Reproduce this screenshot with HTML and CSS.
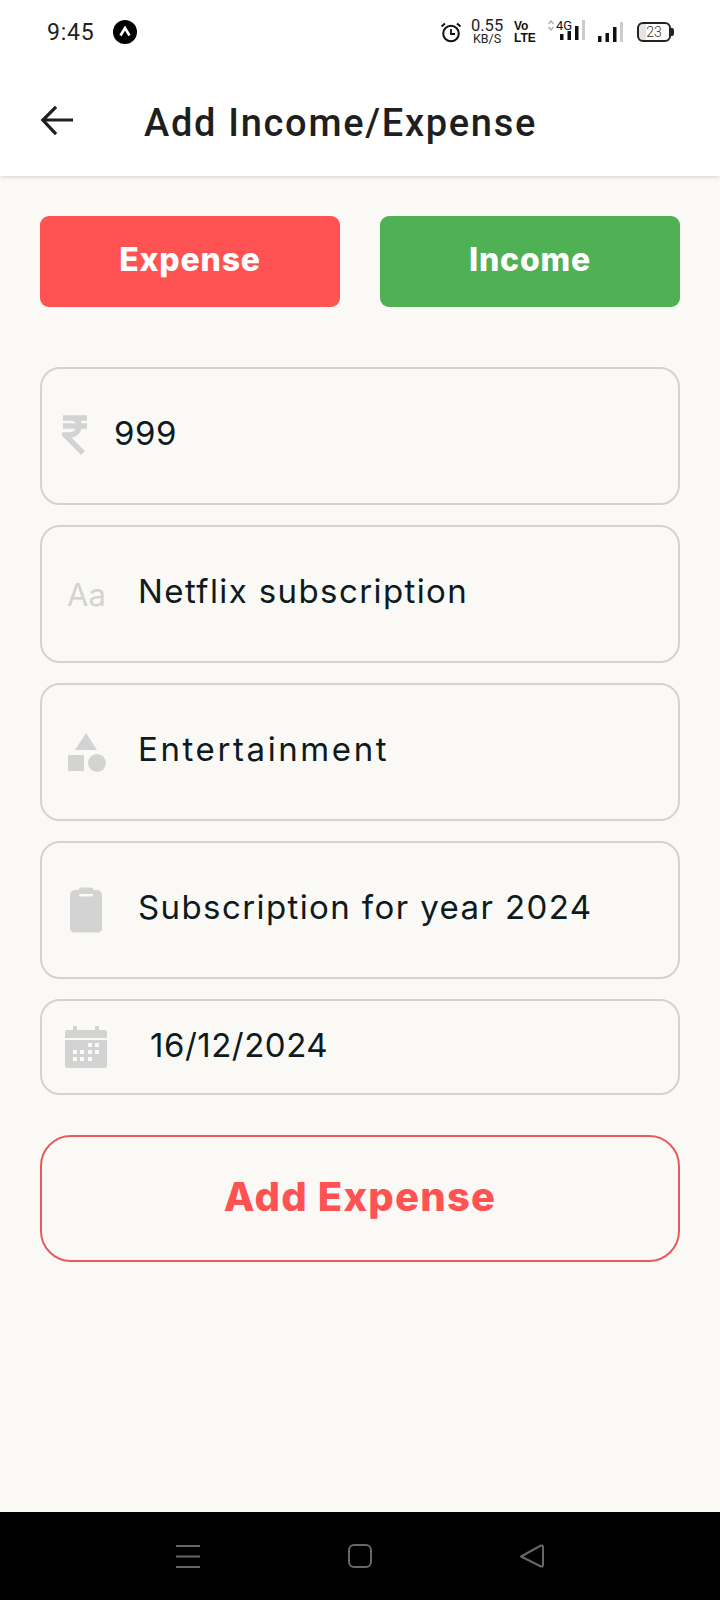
FILE: index.html
```html
<!doctype html>
<html lang="en">
  <head>
    <meta charset="UTF-8">
    <meta content="width=device-width, initial-scale=1.0" name="viewport">
    <title>Add Income/Expense</title>
    <link rel="stylesheet" href="styles.css">
  </head>
  <body>
    <div class="screen">
      <div class="status-bar">
        <div class="status-left">
          <span class="clock">9:45</span>
          <svg class="app-dot" width="24" height="24" viewBox="0 0 24 24">
            <circle cx="12" cy="12" r="12" fill="#000"/>
            <path d="M7.5 15.5 L12 8 L16.5 15.5" fill="none" stroke="#fff" stroke-width="2.6"/>
          </svg>
        </div>
        <div class="status-right">
          <svg width="22" height="22" viewBox="0 0 22 22" class="alarm">
            <circle cx="11" cy="12.5" r="7.8" fill="none" stroke="#111" stroke-width="2"/>
            <path d="M11 8 V13 H15" fill="none" stroke="#111" stroke-width="1.8"/>
            <path d="M1.5 5.5 L5 2.5 M20.500 5.500 L17 2.500" stroke="#111" stroke-width="2"/>
          </svg>
          <div class="speed"><span class="speed-num">0.55</span><span class="speed-unit">KB/S</span></div>
          <div class="volte"><span>Vo</span><span>LTE</span></div>
          <div class="net">
            <span class="net-label">4G</span>
            <svg width="41" height="24" viewBox="0 0 41 24">
              <path d="M4.500 6 L7 3 L9.500 6 M4.500 9 L7 12 L9.500 9" fill="none" stroke="#aaa" stroke-width="1.200"/>
              <rect x="16" y="16" width="3.500" height="6" fill="#111"/>
              <rect x="23.500" y="13" width="3.500" height="9" fill="#111"/>
              <rect x="31" y="8" width="3.500" height="14" fill="#111"/>
              <rect x="38" y="2" width="3" height="20" fill="#ccc"/>
            </svg>
          </div>
          <svg width="27" height="24" viewBox="0 0 27 24" class="signal">
            <rect x="1" y="16" width="3.500" height="6" fill="#111"/>
            <rect x="8.500" y="13" width="3.500" height="9" fill="#111"/>
            <rect x="16" y="7" width="3.500" height="15" fill="#111"/>
            <rect x="23" y="2" width="3" height="20" fill="#ccc"/>
          </svg>
          <div class="battery"><span class="battery-level">23</span></div>
        </div>
      </div>

      <header class="app-header">
        <svg class="back" width="34" height="34" viewBox="0 0 36 36">
          <path d="M35 18 H4 M17 4 L3 18 L17 33" fill="none" stroke="#1f1f1f" stroke-width="3.400"/>
        </svg>
        <h1>Add Income/Expense</h1>
      </header>

      <main class="content">
        <div class="type-row">
          <button class="type-btn expense">Expense</button>
          <button class="type-btn income">Income</button>
        </div>

        <div class="fields">
          <div class="field tall amount">
            <svg class="icon" width="26" height="40" viewBox="0 0 26 40">
              <path d="M1 3 H25 M1 11 H25 M2 3 H9 C15 3 17 7 17 11 C17 16 13 20 8 20 H3 L21 38" fill="none" stroke="#d3d3d3" stroke-width="5.400"/>
            </svg>
            <span class="value num">999</span>
          </div>
          <div class="field tall">
            <span class="icon-box"><span class="aa">Aa</span></span>
            <span class="value">Netflix subscription</span>
          </div>
          <div class="field tall">
            <span class="icon-box">
              <svg width="40" height="40" viewBox="0 0 40 40">
                <path d="M19 1 L30 18 H8 Z" fill="#d3d3d3"/>
                <rect x="1" y="23" width="16" height="16" fill="#d3d3d3"/>
                <circle cx="30" cy="31" r="9" fill="#d3d3d3"/>
              </svg>
            </span>
            <span class="value wide">Entertainment</span>
          </div>
          <div class="field tall">
            <span class="icon-box">
              <svg class="clip" width="36" height="46" viewBox="0 0 36 46">
                <path d="M8 3 H10 C11 1 13 0.500 15 0.500 H21 C23 0.500 25 1 26 3 H28 C32 3 34 5 34 9 V41 C34 44 32 45.500 30 45.500 H6 C4 45.500 2 44 2 41 V9 C2 5 4 3 8 3 Z" fill="#d3d3d3"/>
                <rect x="11" y="7" width="14" height="2.400" rx="1" fill="#fafaf7"/>
              </svg>
            </span>
            <span class="value">Subscription for year 2024</span>
          </div>
          <div class="field short">
            <svg class="icon cal" width="42" height="42" viewBox="0 0 42 42">
              <path d="M8 0 H12 V4 H30 V0 H34 V4 H40 C41 4 42 5 42 6 V12 H0 V6 C0 5 1 4 2 4 H8 Z" fill="#d3d3d3"/>
              <path d="M0 14 H42 V40 C42 41 41 42 40 42 H2 C1 42 0 41 0 40 Z" fill="#d3d3d3"/>
              <g fill="#fafaf7">
                <rect x="23" y="17" width="4" height="4"/><rect x="30" y="17" width="4" height="4"/>
                <rect x="8" y="24" width="4" height="4"/><rect x="15" y="24" width="4" height="4"/><rect x="23" y="24" width="4" height="4"/><rect x="30" y="24" width="4" height="4"/>
                <rect x="8" y="31" width="4" height="4"/><rect x="15" y="31" width="4" height="4"/><rect x="23" y="31" width="4" height="4"/>
              </g>
            </svg>
            <span class="value num date">16/12/2024</span>
          </div>
        </div>

        <button class="submit">Add Expense</button>
      </main>

      <nav class="nav-bar">
        <svg width="24" height="24" viewBox="0 0 24 24">
          <path d="M0 2 H24 M0 12.500 H24 M0 23 H24" stroke="#666" stroke-width="2"/>
        </svg>
        <svg width="24" height="24" viewBox="0 0 24 24">
          <rect x="1" y="1" width="22" height="22" rx="5" fill="none" stroke="#666" stroke-width="2"/>
        </svg>
        <svg width="24" height="24" viewBox="0 0 24 24">
          <path d="M1 12.500 L21 1.500 Q23 1 23 3 V21 Q23 23 21 22.500 Z" fill="none" stroke="#666" stroke-width="2" stroke-linejoin="round"/>
        </svg>
      </nav>
    </div>
  </body>
</html>
```

FILE: styles.css
```css
* {
  box-sizing: border-box
}
body {
  background-color: #000;
  color: #0d1a20;
  font-family: Inter, sans-serif;
  margin: 0
}
.screen {
  display: flex;
  flex-direction: column;
  height: 1600px;
  width: 720px
}
.status-bar {
  align-items: center;
  background-color: #fff;
  display: flex;
  height: 64px;
  justify-content: space-between;
  padding: 0 49px 0 47px
}
.status-left, .status-right {
  align-items: center;
  display: flex
}
.clock {
  color: #222;
  font-family: Roboto, sans-serif;
  font-size: 23px;
  letter-spacing: .8px;
  margin-right: 18px
}
.alarm {
  margin-right: 9px
}
.speed {
  color: #222;
  display: flex;
  flex-direction: column;
  font-family: Roboto, sans-serif;
  margin-right: 11px;
  text-align: center;
  width: 32px
}
.speed-num {
  font-size: 16.500px;
  line-height: 14px
}
.speed-unit {
  font-size: 12.500px;
  line-height: 12px
}
.volte {
  color: #111;
  display: flex;
  flex-direction: column;
  font-family: "Liberation Sans", sans-serif;
  font-size: 12px;
  font-weight: 700;
  line-height: 1;
  margin-right: 6px;
  width: 24px
}
.net {
  margin-right: 12px;
  position: relative
}
.net-label {
  color: #111;
  font-family: Roboto, sans-serif;
  font-size: 13px;
  left: 12px;
  line-height: 13px;
  position: absolute;
  top: 1px
}
.signal {
  margin-right: 13px
}
.battery {
  align-items: center;
  background: linear-gradient(to right, #e4e4e4 25%, transparent 25%);
  border: 2px solid #222;
  border-radius: 6px;
  display: flex;
  height: 20px;
  justify-content: center;
  position: relative;
  width: 34px
}
.battery::after {
  background-color: #222;
  border-radius: 0 2px 2px 0;
  content: "";
  height: 8px;
  position: absolute;
  right: -5px;
  width: 3px
}
.battery-level {
  color: #333;
  font-family: Roboto, sans-serif;
  font-size: 14px;
  font-weight: 300;
  line-height: 16px
}
.app-header {
  align-items: center;
  background-color: #fff;
  box-shadow: 0 2px 4px -1px rgba(0, 0, 0, .16);
  display: flex;
  height: 112px;
  padding: 6px 0 0 40px;
  position: relative;
  z-index: 1
}
.back {
  margin-bottom: 6px
}
.app-header h1 {
  color: #1f1f1f;
  font-family: Roboto, sans-serif;
  font-size: 38px;
  font-weight: 500;
  letter-spacing: 1.700px;
  margin: 0 0 0 70px
}
.content {
  background-color: #faf9f6;
  flex: 1;
  padding: 40px 40px 0
}
.type-row {
  display: flex;
  gap: 40px
}
.type-btn {
  border: 0;
  border-radius: 9px;
  color: #fff;
  flex: 1;
  font-family: Inter, sans-serif;
  font-size: 32px;
  font-weight: 800;
  height: 91px;
  letter-spacing: .8px;
  padding-bottom: 6px
}
.expense {
  background-color: #ff5252
}
.income {
  background-color: #4fb054
}
.fields {
  display: flex;
  flex-direction: column;
  gap: 20px;
  margin-top: 60px
}
.field {
  align-items: center;
  border: 2px solid #d3d3d1;
  border-radius: 20px;
  display: flex;
  padding-left: 20px
}
.tall {
  height: 138px
}
.short {
  height: 96px
}
.icon-box {
  display: flex;
  justify-content: center;
  width: 50px
}
.amount .icon {
  margin-bottom: 2px
}
.clip {
  margin-right: 2px
}
.cal {
  margin-left: 3px
}
.aa {
  color: #d3d3d3;
  font-size: 31px;
  margin-right: 1px
}
.value {
  font-size: 33px;
  letter-spacing: 1.400px;
  margin-left: 26px;
  padding-bottom: 6px
}
.value.num {
  letter-spacing: .5px
}
.value.wide {
  letter-spacing: 2.600px
}
.value.date {
  margin-left: 43px;
  padding-bottom: 4px
}
.submit {
  background: none;
  border: 2px solid #e85a5e;
  border-radius: 31px;
  color: #ff5252;
  display: block;
  font-family: Inter, sans-serif;
  font-size: 40px;
  font-weight: 800;
  height: 127px;
  letter-spacing: 1.200px;
  margin-top: 40px;
  padding-bottom: 6px;
  width: 100%
}
.nav-bar {
  align-items: center;
  background-color: #000;
  display: flex;
  height: 88px;
  justify-content: space-between;
  padding: 0 176px
}
```
